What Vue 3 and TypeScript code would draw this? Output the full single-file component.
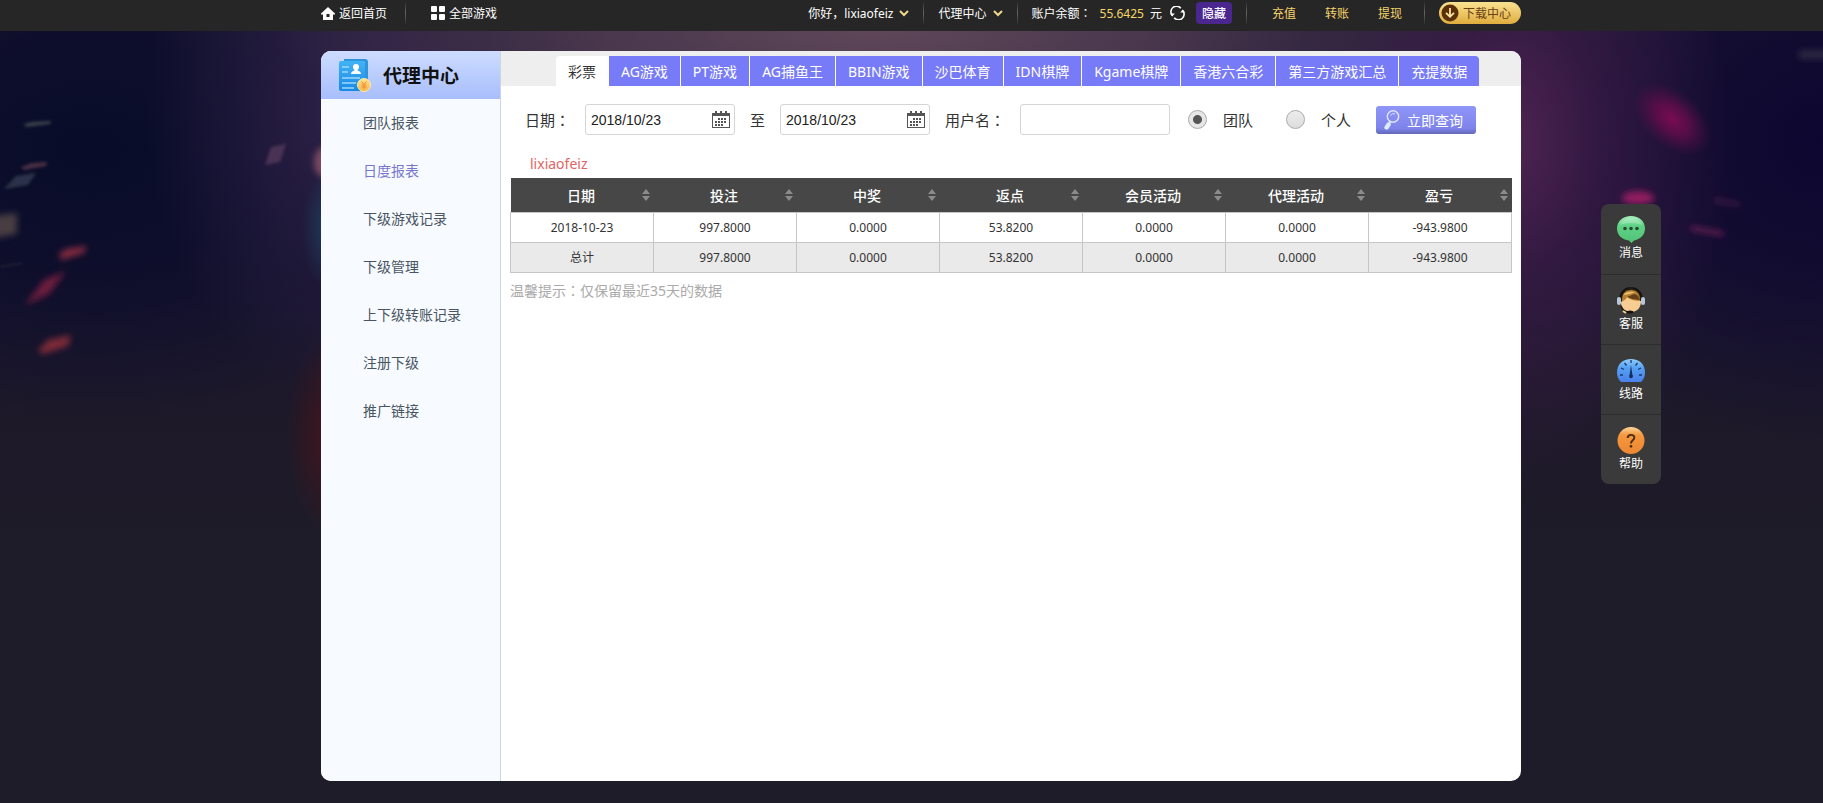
<script setup lang="ts">
import { ref } from 'vue'

const menu: string[] = ['团队报表', '日度报表', '下级游戏记录', '下级管理', '上下级转账记录', '注册下级', '推广链接']
const tabs: string[] = ['彩票', 'AG游戏', 'PT游戏', 'AG捕鱼王', 'BBIN游戏', '沙巴体育', 'IDN棋牌', 'Kgame棋牌', '香港六合彩', '第三方游戏汇总', '充提数据']
const columns: string[] = ['日期', '投注', '中奖', '返点', '会员活动', '代理活动', '盈亏']
const rows: string[][] = [
  ['2018-10-23', '997.8000', '0.0000', '53.8200', '0.0000', '0.0000', '-943.9800'],
  ['总计', '997.8000', '0.0000', '53.8200', '0.0000', '0.0000', '-943.9800'],
]

const activeMenu = ref('日度报表')
const activeTab = ref('彩票')
const fromDate = ref('2018/10/23')
const toDate = ref('2018/10/23')
const username = ref('')
const scope = ref('team')
</script>

<template>
  <div class="page">
    <div class="backdrop" aria-hidden="true">
      <svg class="deco deco-left" width="330" height="560" viewBox="0 0 330 560">
        <defs>
          <filter id="soft" x="-50%" y="-50%" width="200%" height="200%"><feGaussianBlur stdDeviation="3" /></filter>
          <filter id="faint" x="-50%" y="-100%" width="200%" height="300%"><feGaussianBlur stdDeviation="1.5" /></filter>
          <radialGradient id="teal"><stop offset="0" stop-color="#1c4a66" stop-opacity=".7" /><stop offset="1" stop-color="#1c4a66" stop-opacity="0" /></radialGradient>
          <radialGradient id="ember"><stop offset="0" stop-color="#4d1418" stop-opacity=".8" /><stop offset="1" stop-color="#4d1418" stop-opacity="0" /></radialGradient>
        </defs>
        <ellipse cx="328" cy="228" rx="26" ry="60" fill="url(#teal)" />
        <ellipse cx="332" cy="435" rx="46" ry="100" fill="url(#ember)" />
        <g filter="url(#faint)">
          <polygon points="24,124 32,122 51,121 50,124 26,127" fill="#3b414c" />
          <polygon points="21,167 32,163 47,162 46,166 24,170" fill="#462d43" />
          <polygon points="4,189 16,176 36,173 28,185" fill="#2c314a" />
          <polygon points="265,165 271,147 286,144 280,162" fill="#4a3354" />
          <path d="M0 267 L22 263" stroke="#2e3040" fill="none" />
        </g>
        <g filter="url(#soft)">
          <polygon points="-10,216 17,213 17,234 -10,239" fill="#463c42" />
          <polygon points="59,254 66,249 87,246 84,253 61,260" fill="#87293f" />
          <polygon points="25,305 44,280 66,271 49,294" fill="#6d1c3c" />
          <polygon points="38,351 48,340 71,335 68,346 43,354" fill="#7f2b38" />
          <ellipse cx="324" cy="162" rx="10" ry="15" fill="#7c4a62" />
        </g>
      </svg>
      <svg class="deco deco-right" width="323" height="420" viewBox="0 0 323 420">
        <defs>
          <radialGradient id="rose"><stop offset="0" stop-color="#7a0c52" /><stop offset=".45" stop-color="#620d4b" stop-opacity=".8" /><stop offset="1" stop-color="#4d1048" stop-opacity="0" /></radialGradient>
          <filter id="glow" x="-50%" y="-200%" width="200%" height="500%"><feGaussianBlur stdDeviation="3" /></filter>
        </defs>
        <ellipse cx="172" cy="119" rx="46" ry="28" transform="rotate(42 172 119)" fill="url(#rose)" />
        <g filter="url(#glow)">
          <ellipse cx="138" cy="198" rx="16" ry="7" fill="#8e1f5f" />
          <polygon points="190,226 223,232 224,236 191,230" fill="#76205a" />
          <polygon points="214,198 240,203 240,206 214,202" fill="#4a1a4c" />
          <rect x="299" y="50" width="30" height="9" fill="#2c2840" />
        </g>
      </svg>
    </div>

    <header class="topbar">
      <div class="topbar-inner">
        <a class="top-link" href="#">
          <svg width="14" height="13" viewBox="0 0 14 13"><path d="M7 0 L14 6.5 V7.5 H12 V13 H2 V7.5 H0 V6.5 Z M5.5 7 V10 H8.5 V7 Z" fill="#fff" fill-rule="evenodd" /></svg>
          返回首页
        </a>
        <span class="divider first"></span>
        <a class="top-link" href="#">
          <svg width="14" height="14" viewBox="0 0 14 14" fill="#fff"><rect width="6" height="6" rx="1" /><rect x="8" width="6" height="6" rx="1" /><rect y="8" width="6" height="6" rx="1" /><rect x="8" y="8" width="6" height="6" rx="1" /></svg>
          全部游戏
        </a>

        <div class="account">
          <button class="drop" type="button">
            你好，lixiaofeiz
            <svg width="10" height="7" viewBox="0 0 10 7"><path d="M1 1 L5 5 L9 1" fill="none" stroke="#f0d98a" stroke-width="2" /></svg>
          </button>
          <span class="divider"></span>
          <button class="drop" type="button">
            代理中心
            <svg width="10" height="7" viewBox="0 0 10 7"><path d="M1 1 L5 5 L9 1" fill="none" stroke="#f0d98a" stroke-width="2" /></svg>
          </button>
          <span class="divider"></span>
          <span class="balance">账户余额<span class="colon">：</span><b>55.6425</b>元</span>
          <button class="refresh" type="button" aria-label="刷新余额">
            <svg width="15" height="14" viewBox="0 0 15 14"><g fill="none" stroke="#fff" stroke-width="1.6"><path d="M2.2 9.4 A5.6 5.6 0 0 1 10.8 2.2" /><path d="M12.8 4.6 A5.6 5.6 0 0 1 4.2 11.8" /></g><path d="M0 7.4 H4.8 L2.2 10.6Z M10.2 6.6 H15 L12.8 3.4Z" fill="#fff" /></svg>
          </button>
          <button class="hide" type="button">隐藏</button>
          <span class="divider"></span>
          <nav class="money"><a href="#">充值</a><a href="#">转账</a><a href="#">提现</a></nav>
          <span class="divider"></span>
          <a class="download" href="#">
            <svg width="18" height="18" viewBox="0 0 18 18"><circle cx="9" cy="9" r="8.5" fill="#5c3006" /><path d="M9 4 V12.5 M5 8.8 L9 12.8 L13 8.8" fill="none" stroke="#fbe4a0" stroke-width="1.8" /></svg>
            下载中心
          </a>
        </div>
      </div>
    </header>

    <div class="stage">
      <div class="card">
        <aside class="sidebar">
          <h1 class="side-title">
            <svg width="32" height="34" viewBox="0 0 32 34">
              <defs>
                <linearGradient id="doc" x2="0" y2="1"><stop offset="0" stop-color="#43b3f6" /><stop offset="1" stop-color="#1789e6" /></linearGradient>
                <linearGradient id="coin" x2="0" y2="1"><stop offset="0" stop-color="#ffe28a" /><stop offset="1" stop-color="#f8b644" /></linearGradient>
              </defs>
              <path d="M5 1 H26 Q29 1 29 4 V27 H26 V4 H5Z" fill="#2f94dc" />
              <rect y="3" width="26" height="30" rx="2" fill="url(#doc)" />
              <circle cx="17" cy="9" r="3" fill="#fff" /><path d="M12 16 Q12 13.5 15.5 12.5 V11 H18.5 V12.5 Q22 13.5 22 16Z" fill="#fff" />
              <path d="M3 9 H10 M3 14 H9 M3 20 H21 M3 25 H17 M3 30 H15" stroke="#9fd8fd" stroke-width="1.4" />
              <circle cx="25" cy="27" r="6.5" fill="url(#coin)" stroke="#ffe9a8" />
              <path d="M22.5 23.5 L25 26.5 L27.5 23.5 M25 26.5 V31 M22.5 27 H27.5 M22.5 29 H27.5" fill="none" stroke="#f08a3c" />
            </svg>
            代理中心
          </h1>
          <nav class="menu">
            <a v-for="item in menu" :key="item" href="#" :class="{ active: item === activeMenu }" @click.prevent="activeMenu = item">{{ item }}</a>
          </nav>
        </aside>

        <main class="content">
          <div class="tabs" role="tablist">
            <button v-for="tab in tabs" :key="tab" type="button" role="tab" class="tab" :class="{ active: tab === activeTab }" :aria-selected="tab === activeTab" @click="activeTab = tab">{{ tab }}</button>
          </div>

          <form class="filters" @submit.prevent>
            <label for="from-date" class="date-label">日期<span class="colon">：</span></label>
            <div class="field">
              <input id="from-date" v-model="fromDate" type="text" />
              <button type="button" aria-label="选择开始日期">
                <svg width="18" height="17" viewBox="0 0 18 17"><path d="M0 2 H3 V0 H5 V2 H8 V0 H10 V2 H13 V0 H15 V2 H18 V17 H0Z M1 5 V16 H17 V5Z" fill="#555" fill-rule="evenodd" /><path d="M6 8 H15 M3 11 H15 M3 14 H12" stroke="#555" stroke-width="2" stroke-dasharray="2 1" /></svg>
              </button>
            </div>
            <label for="to-date" class="to-label">至</label>
            <div class="field">
              <input id="to-date" v-model="toDate" type="text" />
              <button type="button" aria-label="选择结束日期">
                <svg width="18" height="17" viewBox="0 0 18 17"><path d="M0 2 H3 V0 H5 V2 H8 V0 H10 V2 H13 V0 H15 V2 H18 V17 H0Z M1 5 V16 H17 V5Z" fill="#555" fill-rule="evenodd" /><path d="M6 8 H15 M3 11 H15 M3 14 H12" stroke="#555" stroke-width="2" stroke-dasharray="2 1" /></svg>
              </button>
            </div>
            <label for="username" class="user-label">用户名<span class="colon">：</span></label>
            <div class="field"><input id="username" v-model="username" type="text" /></div>
            <label class="choice"><input v-model="scope" type="radio" name="scope" value="team" />团队</label>
            <label class="choice"><input v-model="scope" type="radio" name="scope" value="self" />个人</label>
            <button class="search" type="submit">
              <svg width="16" height="20" viewBox="0 0 16 20"><circle cx="9" cy="6.5" r="5.7" fill="none" stroke="#dfe4ff" stroke-width="1.5" /><path d="M6.5 5.5 Q8 3 11 3.8" fill="none" stroke="#dfe4ff" /><path d="M6.2 11.5 L5.3 13" stroke="#dfe4ff" stroke-width="2" /><path d="M4.6 14.5 L2.6 17.5" stroke="#dcecff" stroke-width="4.4" stroke-linecap="round" /></svg>
              立即查询
            </button>
          </form>

          <p class="owner">lixiaofeiz</p>
          <div class="report">
            <table>
              <thead>
                <tr>
                  <th v-for="column in columns" :key="column" scope="col">
                    <div class="head-cell">
                      <span>{{ column }}</span>
                      <svg width="8" height="14" viewBox="0 0 8 14" fill="#8b8b8b"><path d="M4 1 L8 6 H0Z M0 8 H8 L4 13Z" /></svg>
                    </div>
                  </th>
                </tr>
              </thead>
              <tbody>
                <tr v-for="row in rows" :key="row[0]"><td v-for="(cell, i) in row" :key="i">{{ cell }}</td></tr>
              </tbody>
            </table>
          </div>
          <p class="note">温馨提示<span class="colon">：</span>仅保留最近35天的数据</p>
        </main>
      </div>
    </div>

    <nav class="dock">
      <a href="#">
        <svg width="28" height="27" viewBox="0 0 28 27"><defs><linearGradient id="green" x2="0" y2="1"><stop offset="0" stop-color="#a9f0bd" /><stop offset=".35" stop-color="#5fd286" /><stop offset="1" stop-color="#52c277" /></linearGradient></defs><path d="M14 0 C22 0 28 5 28 12.5 C28 19 23 23.5 17 24.4 L14.5 27 L12 24.4 C5 23.8 0 19 0 12.5 C0 5 6 0 14 0Z" fill="url(#green)" /><path d="M3 9 Q6 2 14 2 Q22 2 25 9 Q14 5 3 9Z" fill="#fff" opacity=".2" /><g fill="#244b31"><circle cx="8" cy="12.5" r="1.8" /><circle cx="14" cy="12.5" r="1.8" /><circle cx="20" cy="12.5" r="1.8" /></g></svg>
        消息
      </a>
      <a href="#">
        <svg width="28" height="27" viewBox="0 0 28 27"><path d="M3 14 C3 5 8 1 14 1 C20 1 25 5 25 14" fill="#2b2017" stroke="#17120f" stroke-width="2" /><circle cx="14" cy="1.5" r="1.5" fill="#222" /><path d="M5 13 C5 6 9 3 14 3 C19 3 23 6 23 13 V18 H5Z" fill="#b5812f" /><path d="M6 8 Q10 4 18 5 Q14 7 6 8Z" fill="#edc476" /><path d="M4 15 Q9 13 10 10 Q14 14 24 14 C24 21 20 25 14 25 C8 25 4 21 4 15Z" fill="#f7cd93" /><path d="M10 10 Q16 13 23 13 Q21 7 17 7Z" fill="#65401a" /><rect y="10" width="4" height="8" rx="2" fill="#b8c6dc" /><rect x="24" y="10" width="4" height="8" rx="2" fill="#b8c6dc" /><path d="M4 19 Q6 25 13 25" fill="none" stroke="#1a1715" stroke-width="1.2" /><ellipse cx="13" cy="25" rx="3.5" ry="1.6" fill="#17120f" /><path d="M6 24 L9 26" stroke="#f5d08d" stroke-width="2" /></svg>
        客服
      </a>
      <a href="#">
        <svg width="28" height="27" viewBox="0 0 28 27"><defs><linearGradient id="blue" x2="0" y2="1"><stop offset="0" stop-color="#8fcdfa" /><stop offset=".4" stop-color="#55a0f2" /><stop offset="1" stop-color="#4a80ec" /></linearGradient></defs><path d="M4 25 C1 22 0 19 0 15.5 C0 7 6 2 14 2 C22 2 28 7 28 15.5 C28 19 27 22 24 25Z" fill="url(#blue)" /><path d="M14 3 V6 M3 18 H6 M22 18 H25 M4 11 L7 12.5 M24 11 L21 12.5 M7.5 6 L9.5 8.5 M20.5 6 L18.5 8.5" stroke="#17386f" stroke-width="1.3" /><path d="M14 8 L15.3 17.5 A2 2 0 1 1 12.7 17.5Z" fill="#152f60" /></svg>
        线路
      </a>
      <a href="#">
        <svg width="28" height="27" viewBox="0 0 28 28"><defs><linearGradient id="orange" x2="0" y2="1"><stop offset="0" stop-color="#ffd49a" /><stop offset=".3" stop-color="#f3983e" /><stop offset="1" stop-color="#ee8632" /></linearGradient></defs><circle cx="14" cy="14" r="14" fill="url(#orange)" /><path d="M10.5 11.5 C10.5 7.2 17.5 7 17.5 11 C17.5 14 14 13.5 14 17" fill="none" stroke="#4b2b12" stroke-width="2" /><circle cx="14" cy="20" r="1.4" fill="#4b2b12" /></svg>
        帮助
      </a>
    </nav>
  </div>
</template>

<style>
body { margin: 0; background: #1f1c29; }
</style>

<style scoped>
.page {
  position: relative;
  box-sizing: border-box;
  min-height: 100vh;
  display: flex;
  flex-direction: column;
  font-family: "Noto Sans", "Noto Sans CJK SC", sans-serif;
  font-size: 14px;
}
.page *, .page *::before { box-sizing: border-box; }
a { color: inherit; text-decoration: none; }
button { font: inherit; color: inherit; border: 0; padding: 0; background: none; cursor: pointer; }
svg { display: block; flex: none; }
p, h1 { margin: 0; }
.colon { font-family: "Noto Sans CJK TC", sans-serif; line-height: 1; }

.backdrop {
  position: absolute;
  inset: 0;
  overflow: hidden;
  background:
    radial-gradient(ellipse 600px 150px at 48% 30px, #5f4759 0%, rgba(92, 68, 88, .7) 45%, rgba(80, 56, 84, 0) 100%),
    radial-gradient(ellipse 220px 340px at 83% 140px, #4e2352 0%, rgba(65, 28, 75, .6) 40%, rgba(50, 24, 65, 0) 100%),
    radial-gradient(ellipse 330px 300px at 100% 140px, #0d0630 0%, rgba(14, 8, 48, .7) 45%, rgba(25, 18, 45, 0) 100%),
    radial-gradient(ellipse 200px 280px at 19% 110px, #2d2147 0%, rgba(40, 31, 66, 0) 100%),
    radial-gradient(ellipse 380px 270px at 5% 150px, #080c29 0%, rgba(10, 12, 42, .8) 45%, rgba(20, 20, 45, 0) 100%),
    linear-gradient(#201a35 0, #1c1632 240px, #1d1929 420px, #1f1c29 560px);
}
.deco { position: absolute; top: 0; }
.deco-left { left: 0; }
.deco-right { right: 0; }

.topbar { position: relative; background: #262626; padding-left: 19px; color: #fff; font-size: 12px; }
.topbar-inner { max-width: 1200px; height: 31px; margin: 0 auto; padding: 0 0 5px; display: flex; align-items: center; white-space: nowrap; }
.top-link { display: flex; align-items: center; gap: 4px; }
.divider { width: 1px; height: 22px; margin: 0 14px; background: linear-gradient(#2e2e2e, #666, #2e2e2e); }
.divider.first { margin: 0 25px 0 18px; }
.account { margin-left: auto; display: flex; align-items: center; }
.drop { display: flex; align-items: center; gap: 6px; }
.balance b { margin: 0 6px 0 8px; font-weight: 400; color: #f7d866; }
.refresh { margin: 0 11px 0 8px; }
.hide { width: 36px; height: 22px; border-radius: 4px; background: #4a268f; font-weight: 500; }
.money { display: flex; gap: 29px; margin: 0 8px 0 11px; color: #f5d36a; }
.download { width: 82px; height: 22px; padding-left: 2px; display: flex; align-items: center; gap: 4px; border-radius: 11px; background: linear-gradient(#fae292, #e0ad3e); color: #6c4212; }

.stage { position: relative; flex: 1; display: flex; justify-content: center; padding: 20px 0 22px 19px; }
.card { flex: 1; max-width: 1200px; display: flex; border-radius: 10px; overflow: hidden; background: #fff; }

.sidebar { width: 180px; flex: none; background: #f7fbff; border-right: 1px solid #ccd5e2; }
.side-title { height: 48px; padding-left: 18px; display: flex; align-items: center; gap: 12px; background: linear-gradient(#cddcff, #a8befc); font-size: 19px; font-weight: 700; color: #111; }
.menu { display: flex; flex-direction: column; }
.menu a { height: 48px; line-height: 48px; padding-left: 42px; color: #4a5563; }
.menu a.active { color: #7877cf; }

.content { flex: 1; min-width: 0; }
.tabs { display: flex; height: 35px; padding: 5px 0 0 55px; background: #eee; color: #fff; }
.tab { height: 30px; padding: 0 12px; border-right: 1px solid #fff; background: #777bf8; white-space: nowrap; }
.tab.active { background: #fff; color: #333; border-radius: 4px 0 0; }
.tab:last-child { border-right: 0; border-radius: 0 4px 0 0; }

.filters { display: flex; align-items: center; padding: 18px 24px 0; font-size: 15px; color: #333; white-space: nowrap; }
.date-label { width: 60px; }
.to-label { margin: 0 15px; }
.user-label { width: 75px; margin-left: 15px; }
.field { width: 150px; height: 31px; display: flex; align-items: center; padding: 0 4px 0 5px; border: 1px solid #d5d5d5; border-radius: 3px; }
.field input { flex: 1; min-width: 0; height: 100%; padding: 0; border: 0; outline: 0; background: transparent; font: 14px "Liberation Sans", Arial, sans-serif; color: #222; }
.choice { display: flex; align-items: center; gap: 16px; margin-left: 18px; }
.choice + .choice { margin-left: 33px; }
.choice input { appearance: none; width: 19px; height: 19px; margin: 0; border: 1px solid #aaa; border-radius: 50%; background: linear-gradient(#ececec, #ddd); }
.choice input:checked { background: radial-gradient(circle, #555 4px, #e6e6e6 5px); }
.search { width: 100px; height: 28px; margin-left: 25px; padding-left: 8px; display: flex; align-items: center; gap: 7px; border-radius: 3px; background: linear-gradient(#9096f8, #7d83ea 80%, #6467b5); color: #fff; font-size: 14px; }

.owner { padding: 19px 0 4px 29px; line-height: 20px; color: #e36464; }
.report { padding: 0 9px; }
table { width: 100%; table-layout: fixed; border-collapse: collapse; color: #333; font-size: 12px; text-align: center; }
th { height: 34px; padding: 0; background: #474747; color: #fff; font-size: 14px; font-weight: 500; }
.head-cell { display: flex; align-items: center; padding: 0 4px 0 10px; }
.head-cell span { flex: 1; }
td { height: 30px; padding: 0; border: 1px solid #c9c5c5; }
tbody tr:nth-child(even) { background: #eaeaea; }
.note { padding: 8px 9px; line-height: 20px; color: #aaa; }

.dock { position: fixed; top: 204px; right: 162px; width: 60px; border-radius: 8px; overflow: hidden; background: #3a3a3a; color: #fff; font-size: 12px; }
.dock a { height: 70px; padding-top: 12px; display: flex; flex-direction: column; align-items: center; gap: 1px; line-height: 18px; }
.dock a + a { border-top: 1px solid #2d2d2d; }
</style>
